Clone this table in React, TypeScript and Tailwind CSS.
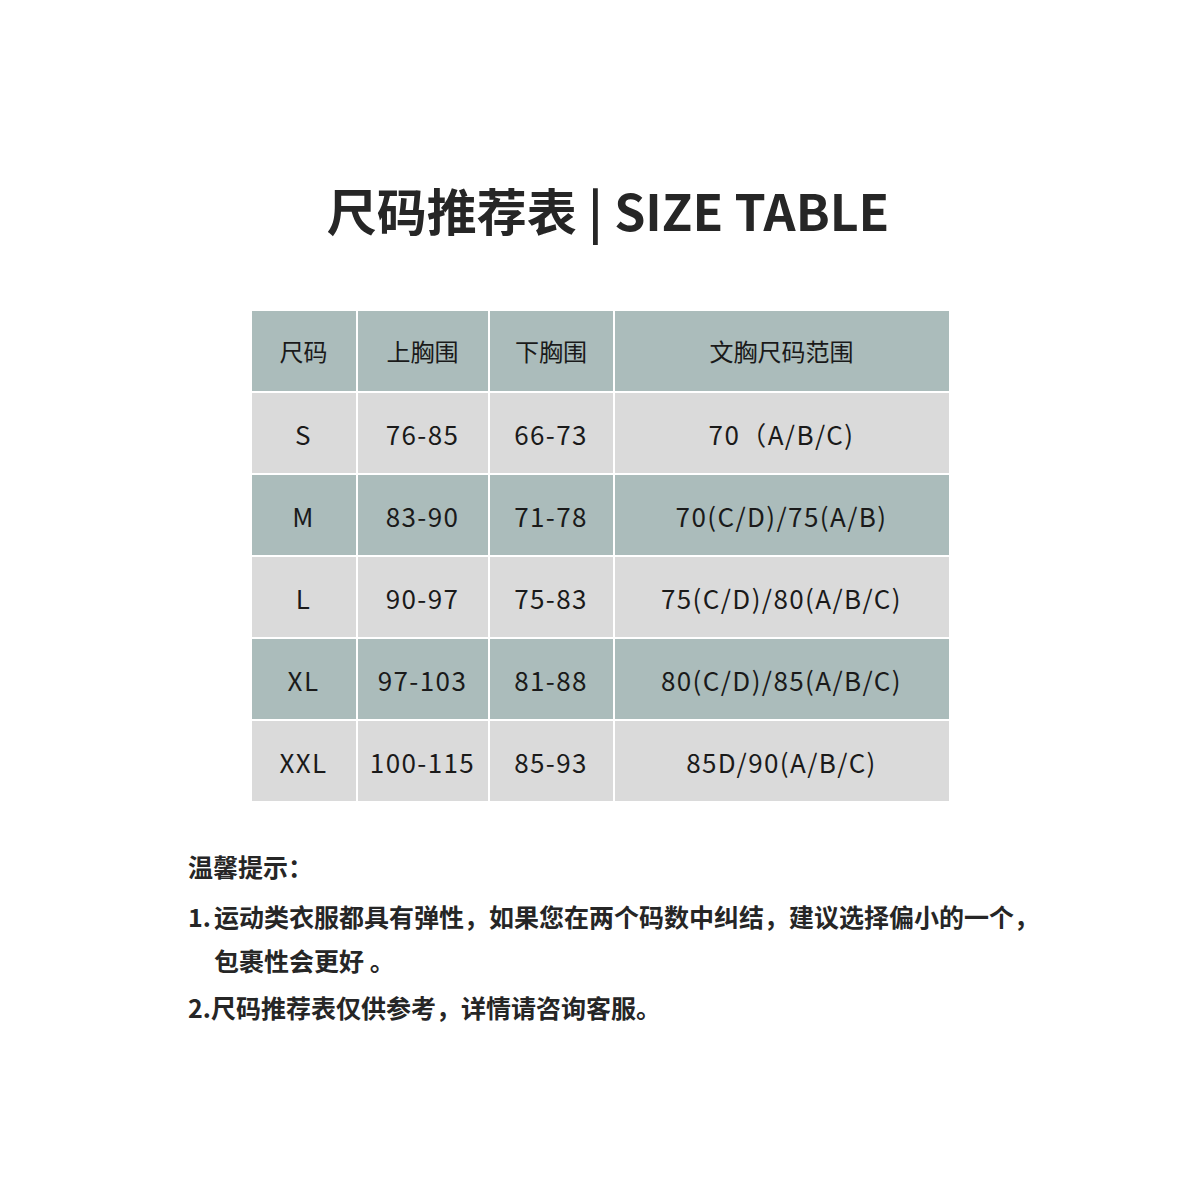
const rows = [
  { size: "S", top: "76-85", under: "66-73", cup: "70（A/B/C)" },
  { size: "M", top: "83-90", under: "71-78", cup: "70(C/D)/75(A/B)" },
  { size: "L", top: "90-97", under: "75-83", cup: "75(C/D)/80(A/B/C)" },
  { size: "XL", top: "97-103", under: "81-88", cup: "80(C/D)/85(A/B/C)" },
  { size: "XXL", top: "100-115", under: "85-93", cup: "85D/90(A/B/C)" },
]

const headers = ["尺码", "上胸围", "下胸围", "文胸尺码范围"]

function Cell({
  children,
  tone,
  head,
}: {
  children: React.ReactNode
  tone: "green" | "gray"
  head?: boolean
}) {
  return (
    <div
      className={`flex h-[80px] items-center justify-center text-[#1a1a1a] ${
        head ? "text-[24px]" : "text-[26px] tracking-[1.4px]"
      } ${tone === "green" ? "bg-[#abbcbb]" : "bg-[#dadada]"}`}
    >
      {children}
    </div>
  )
}

export default function App() {
  return (
    <div
      className="min-h-[1200px] w-[1200px] bg-white"
      style={{ fontFamily: '"Noto Sans CJK SC", "Noto Sans", sans-serif' }}
    >
      <h1 className="pt-[174px] pl-[16px] text-center text-[50px] font-bold leading-[70px] text-[#262626]">
        尺码推荐表 | SIZE TABLE
      </h1>

      <div className="mx-auto mt-[67px] grid w-[697px] grid-cols-[104px_130px_123px_334px] gap-[2px] bg-white">
        {headers.map((h) => (
          <Cell key={h} tone="green" head>
            {h}
          </Cell>
        ))}
        {rows.map((r, i) => {
          const tone = i % 2 === 0 ? "gray" : "green"
          return [
            <Cell key={r.size + "s"} tone={tone}>{r.size}</Cell>,
            <Cell key={r.size + "t"} tone={tone}>{r.top}</Cell>,
            <Cell key={r.size + "u"} tone={tone}>{r.under}</Cell>,
            <Cell key={r.size + "c"} tone={tone}>{r.cup}</Cell>,
          ]
        })}
      </div>

      <div className="ml-[188px] mt-[43px] w-[860px] text-[25px] font-bold text-[#262626]">
        <p className="leading-[44px]">温馨提示：</p>
        <div className="mt-[6px] flex leading-[44px]">
          <span className="w-[26px] shrink-0">1.</span>
          <p>
            运动类衣服都具有弹性，如果您在两个码数中纠结，建议选择偏小的一个，
            <br />
            包裹性会更好 。
          </p>
        </div>
        <p className="mt-[3px] leading-[44px]">2.尺码推荐表仅供参考，详情请咨询客服。</p>
      </div>
    </div>
  )
}
